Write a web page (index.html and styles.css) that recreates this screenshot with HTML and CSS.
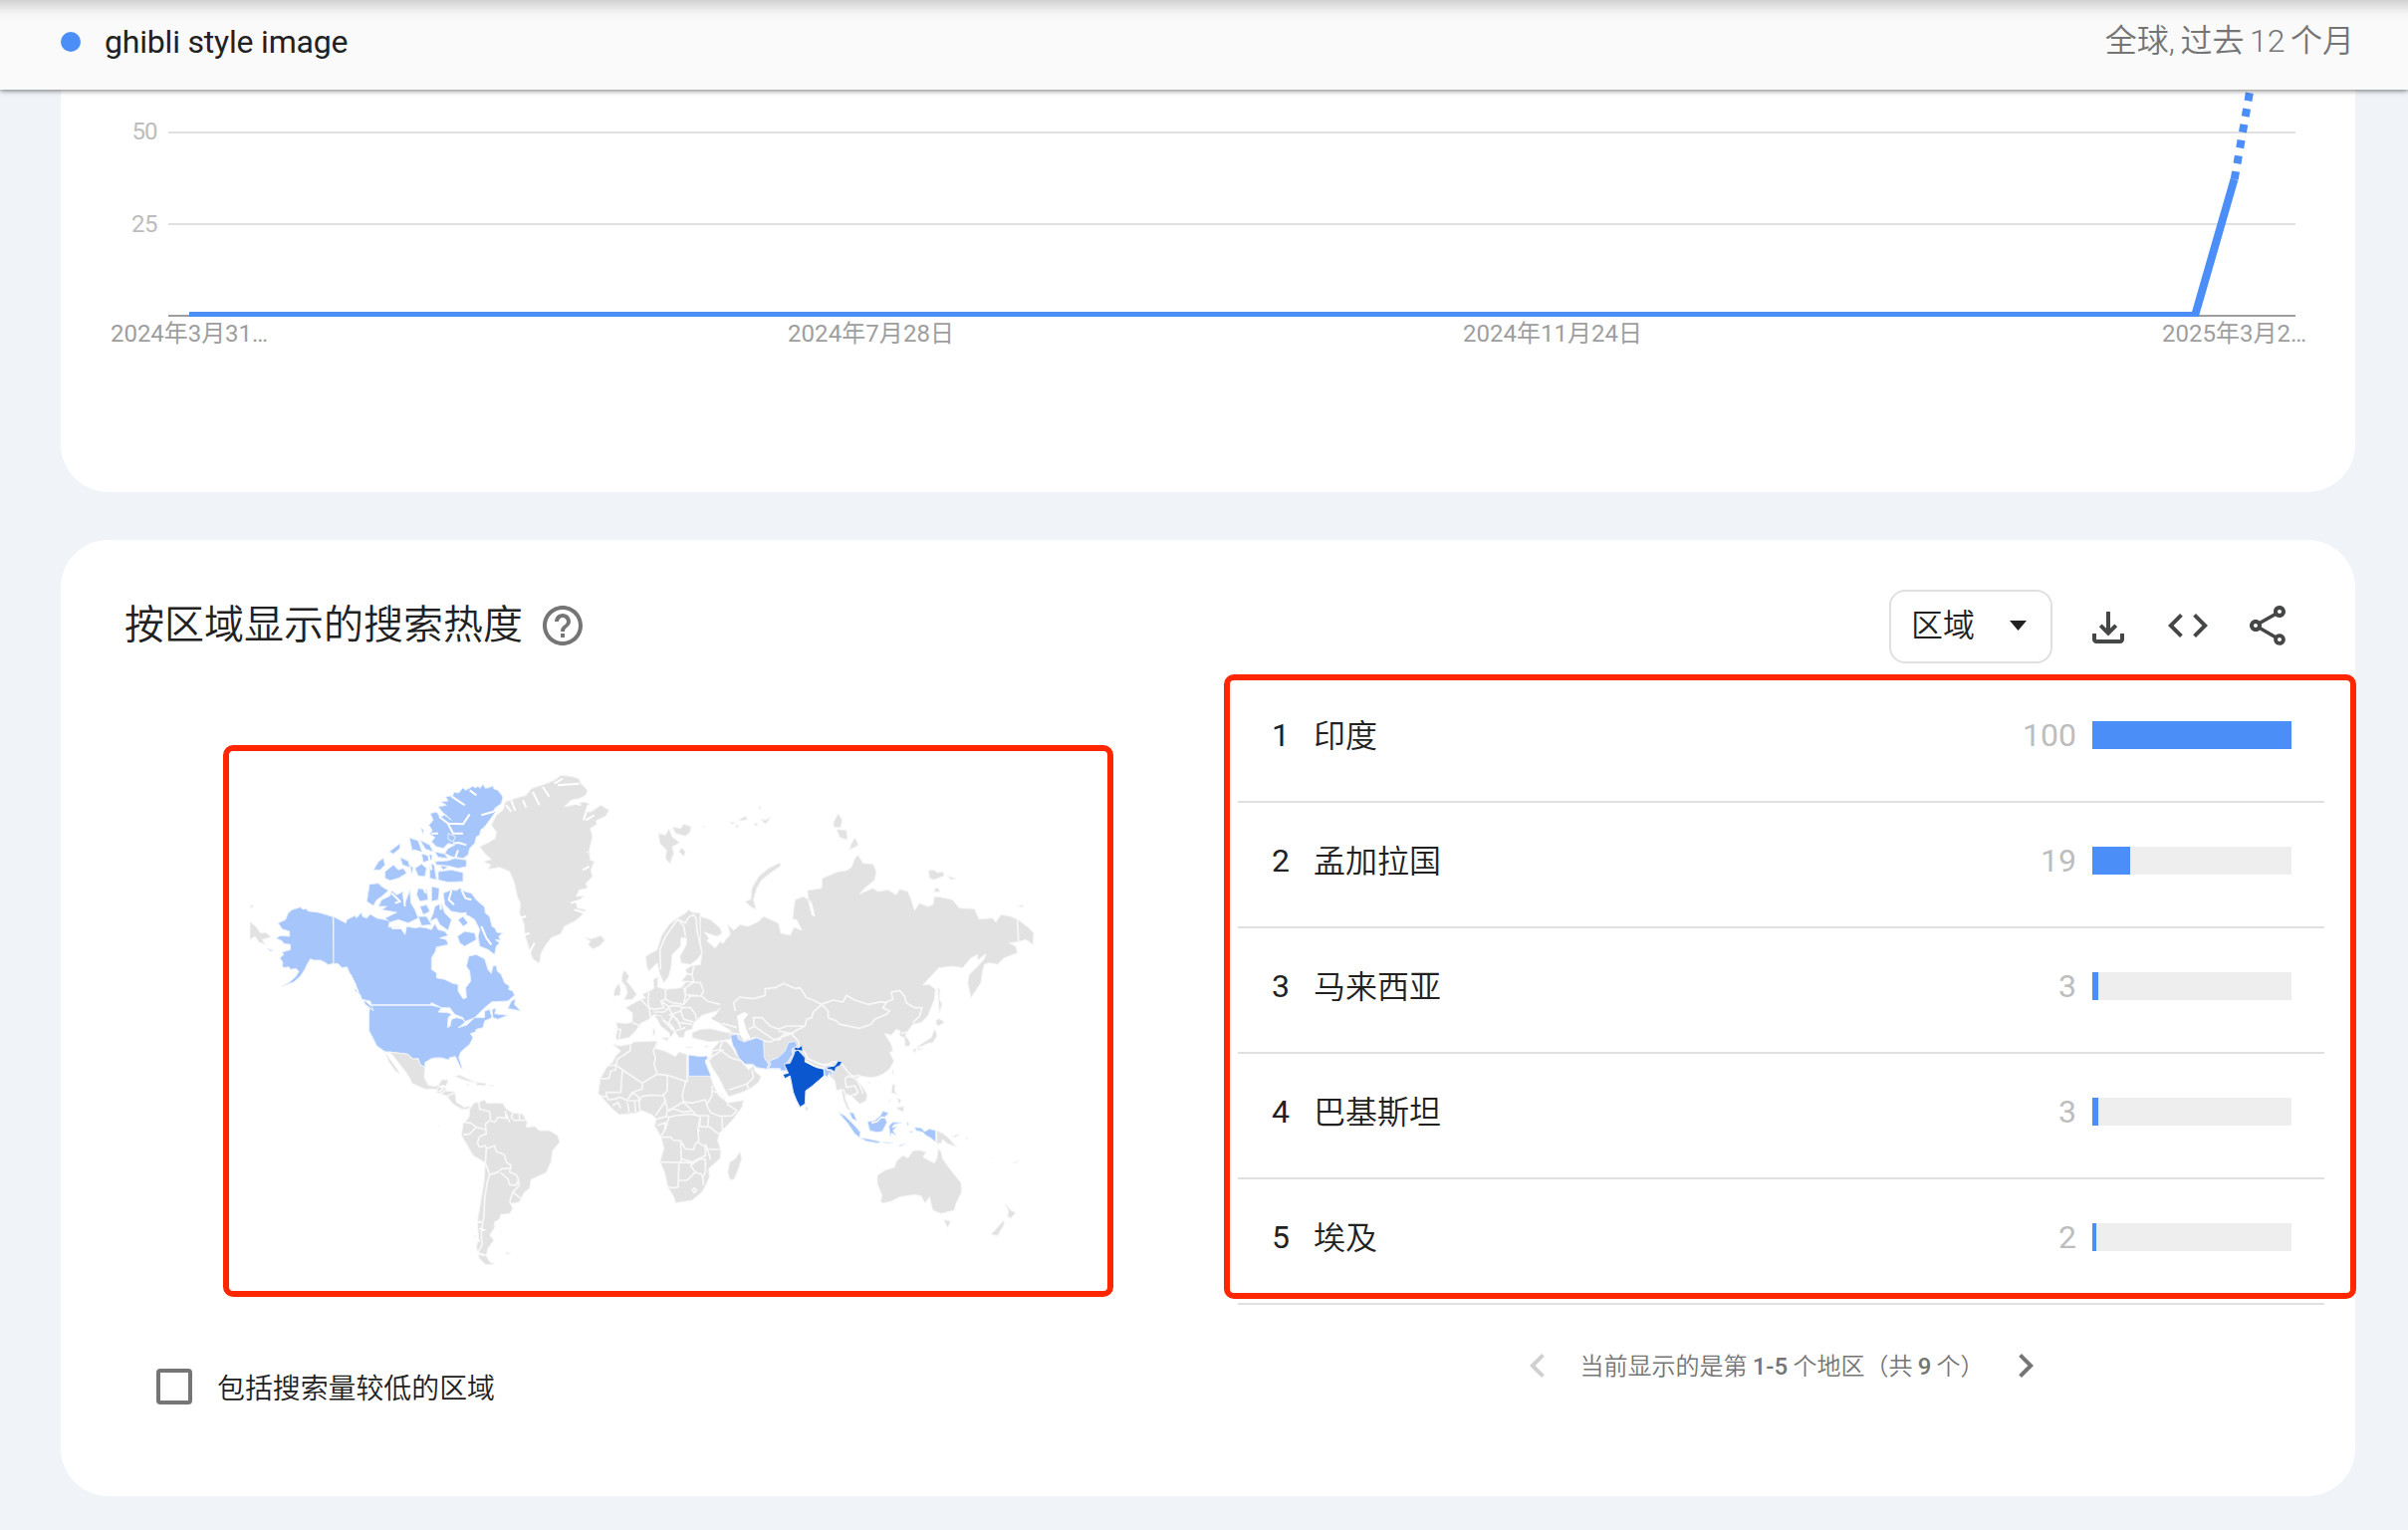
FILE: index.html
```html
<!DOCTYPE html>
<html lang="zh-CN">
<head>
<meta charset="utf-8">
<title>ghibli style image</title>
<link rel="stylesheet" href="styles.css">
</head>
<body>
<header class="topbar">
  <div class="term"><span class="term-dot"></span><span class="term-name">ghibli style image</span></div>
  <div class="scope">全球, 过去 12 个月</div>
</header>
<main class="page">
  <section class="card card-trend">
    <svg class="trend-chart" width="2304" height="404" viewBox="61 90 2304 404">
      <path class="grid" d="M169 133H2305M169 225H2305"/>
      <path class="axis" d="M169 317H2305"/>
      <clipPath id="plot"><rect x="190" y="60" width="2115" height="258"/></clipPath>
      <g clip-path="url(#plot)">
        <path class="series" d="M190 317H2204L2243.5 180"/>
        <path class="series dashed" d="M2243.7 180L2269 35"/>
      </g>
      <g class="ylabels">
        <text x="132.500" y="139.500" textLength="26">50</text>
        <text x="132" y="232.500" textLength="26.500">25</text>
      </g>
      <g class="xlabels">
        <text x="111" y="343" textLength="158">2024年3月31…</text>
        <text x="791" y="343" textLength="167">2024年7月28日</text>
        <text x="1469" y="343" textLength="180">2024年11月24日</text>
        <text x="2171" y="343" textLength="145">2025年3月2…</text>
      </g>
    </svg>
  </section>

  <section class="card card-region">
    <div class="card-head">
      <h2 class="card-title">按区域显示的搜索热度</h2>
      <svg class="icon help" viewBox="0 0 24 24"><path d="M11 18h2v-2h-2v2zm1-16C6.480 2 2 6.480 2 12s4.480 10 10 10 10-4.480 10-10S17.520 2 12 2zm0 18c-4.410 0-8-3.590-8-8s3.590-8 8-8 8 3.590 8 8-3.590 8-8 8zm0-14c-2.210 0-4 1.790-4 4h2c0-1.100.9-2 2-2s2 .9 2 2c0 2-3 1.750-3 5h2c0-2.250 3-2.500 3-5 0-2.210-1.790-4-4-4z"/></svg>
      <div class="actions">
        <div class="select"><span>区域</span><svg width="17" height="10" viewBox="0 0 17 10"><path d="M0 0h17L8.500 10z"/></svg></div>
        <svg class="icon" viewBox="0 -1 24 24"><path d="M16.590 11.600 15.200 10.200 13 12.400V4h-2v8.400L8.800 10.200 7.400 11.600l4.600 4.600zM4 15v3c0 1.100.9 2 2 2h12c1.100 0 2-.9 2-2v-3h-2v3H6v-3z"/></svg>
        <svg class="icon" viewBox="0 0 24 24"><path d="M9.400 16.600 4.800 12l4.600-4.600L8 6l-6 6 6 6 1.400-1.400zm5.200 0 4.600-4.600-4.600-4.600L16 6l6 6-6 6-1.400-1.400z"/></svg>
        <svg class="icon" viewBox="0 0 24 24"><path d="M18 16.080c-.76 0-1.440.3-1.960.77L8.910 12.700c.05-.23.09-.46.09-.7s-.04-.47-.09-.7l7.050-4.110c.54.5 1.250.81 2.040.81 1.660 0 3-1.340 3-3s-1.340-3-3-3-3 1.340-3 3c0 .24.040.47.090.7L8.040 9.810C7.500 9.310 6.790 9 6 9c-1.660 0-3 1.340-3 3s1.340 3 3 3c.79 0 1.500-.31 2.040-.81l7.120 4.160c-.05.21-.08.43-.08.65 0 1.610 1.310 2.920 2.920 2.920s2.920-1.310 2.920-2.920-1.310-2.920-2.920-2.920zM18 4c.55 0 1 .45 1 1s-.45 1-1 1-1-.45-1-1 .45-1 1-1zM6 13c-.55 0-1-.45-1-1s.45-1 1-1 1 .45 1 1-.45 1-1 1zm12 7.020c-.55 0-1-.45-1-1s.45-1 1-1 1 .45 1 1-.45 1-1 1z"/></svg>
      </div>
    </div>
    <div class="card-body">
      <div class="map-col">
        <div class="map-frame">
<svg class="map" width="882" height="542" viewBox="230 754 882 542">
  <!-- North America and Greenland -->
  <g transform="translate(220 740) scale(.33333)">
    <path class="hit" d="M245 512L252 519 262 517 268 524 300 528 320 534 343 541 345 681 330 686 318 678 305 672 285 672 275 668 265 685 258 700 245 720 225 738 190 750 212 738 230 722 240 706 232 697 215 700 210 692 200 694 190 692 192 678 183 665 195 655 190 648 215 640 215 625 195 622 190 614 172 606 185 598 212 600 212 585 190 578 178 560 200 550 208 530 220 520Z"/>
    <path class="hit" d="M345 541L382 560 385 550 410 537 413 545 430 528 432 540 445 545 455 533 475 545 515 553 510 572 545 572 560 595 565 570 590 575 605 572 625 575 640 580 650 562 660 580 680 585 690 598 665 605 685 610 690 625 668 630 655 632 652 645 640 665 640 700 655 710 655 725 680 730 705 742 720 745 720 765 735 788 745 785 743 755 758 735 755 705 745 690 752 660 775 655 800 668 810 700 820 712 825 690 835 688 838 705 850 715 860 740 875 750 872 760 885 765 890 778 870 795 822 797 800 815 770 845 740 857 735 845 710 835 695 815 670 815 640 800 636 806 460 806 455 795 430 790 425 775 410 765 412 745 400 725 385 692 370 695 358 682 345 682Z"/>
    <path class="hit" d="M455 808L640 808 670 815 660 828 690 830 700 835 690 845 688 875 696 870 700 850 715 845 735 850 740 860 720 875 745 868 770 845 800 845 800 825 815 820 822 845 800 855 795 875 775 880 772 888 757 893 765 905 755 925 728 948 722 965 733 998 727 995 718 975 712 962 695 965 692 972 670 966 650 966 640 968 620 980 620 997 605 985 600 968 585 970 568 955 500 947 475 930 463 905 452 885 452 830Z"/>
    <path class="hit" d="M765 148L772 153 780 148 786 154 795 142 802 154 812 152 825 147 828 156 840 160 855 180 850 200 830 215 833 225 815 250 800 270 788 280 785 295 775 300 770 320 755 335 750 355 735 365 700 360 680 350 690 335 710 325 690 320 675 335 655 330 640 315 650 302 635 292 642 280 632 265 645 250 636 230 655 225 665 240 680 235 700 250 672 225 660 210 685 205 668 195 690 192 682 180 704 176 708 166 722 168 735 152 742 160Z"/>
    <path class="hit" d="M650 375L690 372 710 365 745 370 745 390 720 395 690 388 655 385ZM660 405L700 400 735 408 735 435 690 437 660 430ZM465 400L480 375 495 365 500 385 485 400ZM500 405L525 385 540 400 555 395 565 410 540 425 515 432 500 425ZM513 345L545 320 545 335 525 352ZM573 303L600 312 612 347 582 342ZM605 310L635 325 645 345 622 338ZM610 350L642 355 640 370 615 377ZM590 395L610 382 625 395 620 420 600 418ZM635 380L648 385 655 430 635 425ZM545 362L570 373 575 393 553 385ZM608 273L616 279 614 293ZM575 385L585 395 580 412ZM690 290L712 300 705 315 690 308ZM650 345L680 352 690 365 660 362ZM665 385L690 392 675 400Z"/>
    <path class="hit" d="M453 443L480 440 490 450 510 462 490 480 475 490 465 508 445 495ZM490 490L515 478 520 462 535 475 555 465 560 500 575 460 578 500 590 520 600 545 570 560 540 550 515 558 500 545 535 528 490 520 505 510 480 510ZM600 455L625 460 630 490 605 495 595 475ZM605 510L625 505 635 525 615 535ZM640 450L665 455 660 490 640 495ZM600 540L625 540 640 565 610 568ZM650 510L670 500 680 530 700 550 690 582 665 565 655 545 635 555 645 530ZM675 470L700 460 715 462 725 455 740 465 760 470 775 490 800 512 802 530 815 540 822 570 832 576 836 588 854 590 842 600 848 612 832 610 845 620 835 630 830 655 810 640 785 630 780 600 785 580 770 550 755 540 730 530 700 525 680 505ZM718 600L740 585 770 590 775 610 740 630 725 620ZM720 550L735 540 750 560 735 570ZM880 795L893 788 890 805 908 825 885 820 870 818ZM822 820L835 817 830 833 870 838 840 850 825 845ZM435 790L460 812 465 824 440 805ZM145 637L163 643 155 645Z"/>
    <path class="water" d="M663 240L690 260 735 262 755 232M690 262L705 290 735 290M700 178L740 205M790 235L825 225 856 203M705 320L722 318 745 325M700 462L692 490 708 505M730 460L742 485 760 490M555 470L560 510M610 440L622 470M628 340L640 400M585 340L630 355M665 455L668 520M720 340L712 362M755 160L775 175M640 290L660 290M520 470L545 495 530 500M790 570L805 605 820 625M395 715L420 770M520 575L550 575M690 540L745 530M690 600L700 630"/>
    <path class="land" d="M1030 115L1060 118 1085 126 1090 140 1110 160 1105 175 1085 185 1060 190 1040 210 1065 205 1098 195 1115 200 1105 225 1120 225 1150 205 1175 220 1165 238 1135 252 1138 262 1118 275 1125 300 1115 340 1118 370 1130 375 1120 400 1125 420 1105 440 1110 455 1085 460 1075 480 1100 478 1075 500 1080 515 1105 520 1090 540 1070 555 1040 570 1030 592 1000 605 985 625 970 650 965 682 945 668 935 640 922 600 918 560 905 530 908 500 898 480 890 440 875 405 845 392 810 398 818 385 797 375 820 368 800 350 785 330 810 318 832 305 835 285 820 265 835 235 855 220 862 195 890 185 925 175 940 155 985 140 1010 130ZM1100 602L1120 608 1150 598 1162 612 1145 630 1125 638 1112 625 1118 615ZM93 555L110 570 125 590 140 588 157 602 130 610 140 625 120 618 108 600 93 610ZM94 504L105 510 94 515ZM1105 345L1118 350"/>
    <path class="water" d="M880 190L892 222M915 190L925 212M945 165L965 205M975 150L995 180M1020 145L1085 140M1035 125L1010 140M1060 195L1090 205M1112 205L1098 250M1090 490L1060 500M1115 390L1095 400M925 540L900 545M935 590L910 600M950 620L935 650M1105 530L1070 520M865 205L880 225M1130 235L1105 250"/>
  </g>
  <!-- Mexico, Central and South America -->
  <g transform="translate(400 1060) scale(.33333)">
    <path class="land" d="M-28 -12L28 -5 45 10 60 8 65 25 80 35 78 65 90 88 108 92 122 88 130 72 150 72 145 90 135 100 120 108 115 100 80 100 40 82 35 68 20 45 0 20 -15 0ZM-40 -12L-25 10 0 45 5 55 -10 45 -30 15ZM120 92L145 92 140 105 170 108 175 140 200 155 215 150 212 160 190 160 165 145 145 120 115 110ZM170 62L185 58 200 65 235 80 205 75ZM235 80L262 82 265 90 235 88ZM205 86L217 88 210 91ZM275 88L288 89 275 92ZM122 210L126 212 123 214Z"/>
    <path class="land" d="M240 140L260 132 265 142 315 143 325 160 345 172 375 175 388 200 385 215 410 212 425 225 455 225 480 240 486 260 465 285 460 320 445 352 400 372 395 400 380 410 365 440 345 445 335 440 345 460 335 475 308 478 305 492 290 500 288 515 295 510 275 540 288 555 270 580 265 600 240 592 235 575 242 550 238 500 248 440 258 380 262 322 225 300 205 265 190 240 195 205 213 185 215 160 228 142ZM240 598L265 603 275 620 290 628 262 628 245 612ZM320 594L340 592 328 598ZM228 543L236 540 233 550Z"/>
    <path class="border" d="M243 138L245 160 275 168 278 195 290 200 300 185 325 188 322 165M275 195L262 205 265 235 245 243 238 262 245 275 262 270 265 280 290 270 295 288 320 298 325 320 340 330 335 350 355 358 362 372 355 390 335 388 330 370 308 352M195 238L215 235 235 215 262 222M235 215L220 203 200 200M265 280L262 322 275 358 300 350 312 340 335 338M275 358L268 380 260 430 258 480 250 530 252 570 240 592M362 375L365 390 345 410 335 440M345 410L370 430M345 172L340 185 350 195 385 193M365 175L365 195M325 175L335 200M120 92L135 95 125 108M140 105L125 115M145 122L172 110"/>
    <path class="water" d="M235 500L250 500M245 520L262 526M232 545L245 560M130 90L150 95"/>
  </g>
  <!-- Africa -->
  <g transform="translate(580 1000) scale(.33333)">
    <path class="land" d="M105 145L125 150 160 145 170 138 235 135 240 140 235 158 262 165 295 182 305 168 335 178 370 182 390 182 385 195 400 240 410 270 425 300 445 315 450 322 500 314 495 335 465 375 428 412 422 435 432 465 430 488 395 520 397 545 385 572 375 590 345 615 295 623 290 605 272 575 262 530 248 500 260 460 252 425 232 390 238 370 225 358 195 345 175 352 125 357 105 340 85 318 62 292 68 250 90 210 105 200 115 180 130 165ZM490 468L494 490 485 520 472 552 458 553 452 530 458 500 475 490Z"/>
    <path class="border" d="M160 145L158 165 120 190 115 207 90 210M115 207L115 222 100 225 95 247 70 250M135 222L130 290 85 290M115 207L135 222 195 262 240 235 230 205 235 185 228 165 238 142M240 235L270 238 330 258 330 178M270 238L270 285 258 298 265 320 272 345 290 335 320 318 315 300 325 258M195 262L195 280 165 290 150 312M195 302L220 298 258 300 265 315 245 345 235 360M85 290L92 312 110 310M105 330L122 320 130 338M70 300L92 305M150 320L155 350M172 318L175 350M185 315L188 345M110 310L130 305 150 315 185 315 195 300M150 312L165 292 180 300 190 315M320 318L345 322 385 312 390 330 400 350 430 362 465 360 480 345 450 325M320 320L345 345 360 360 395 360M405 270L405 300 390 325M405 285L430 295 445 312M435 362L437 410M395 360L392 390 425 415M370 360L368 392 392 395M275 365L295 360 340 355 370 362 362 400 365 435 355 445 350 462 325 460 310 435 290 435 280 425 255 425M275 365L265 400 250 425M268 348L268 362 275 365M240 370L268 362M310 435L312 465 312 490 310 502M312 490L345 500 385 480 385 455 362 440M385 445L397 480 400 492M385 460L430 462M385 490L385 530 375 550M250 500L345 502M305 505L303 575 290 578 272 575M303 555L330 555 355 530 340 510 365 492 385 490M355 530L375 538 380 570M240 390L265 380 262 405M345 585L352 578 359 585 352 592ZM268 348L290 340 320 350 345 345M362 400L368 408"/>
    <path class="hit" d="M334 177L370 182 390 180 392 190 384 197 402 241 334 241Z"/>
    <!-- Arabia and Turkey -->
    <path class="land" d="M400 190L406 160 430 135 450 138 465 155 480 180 500 205 515 222 530 210 535 228 553 242 545 260 525 275 500 288 455 303 445 285 425 245 405 215 395 192ZM345 110L370 100 400 98 430 105 460 112 462 130 430 135 400 138 370 132 345 125ZM325 152L350 154 335 157ZM382 152L396 148 388 155ZM688 330L695 338 692 346 686 342Z"/>
    <path class="border" d="M405 165L428 162 435 138M428 162L440 170 460 185 490 195M455 283L510 265 515 278M510 265L530 245 525 222M405 170L400 192"/>
  </g>
  <!-- Europe and Asia -->
  <g transform="translate(560 740) scale(.33333)">
    <path class="land" d="M265 660L300 640 312 600 335 565 360 545 385 530 395 520 405 527 430 530 428 545 430 575 430 620 435 650 420 670 400 685 372 680 368 660 388 625 388 605 372 605 370 630 345 655 342 690 335 720 320 740 308 715 300 680 275 705 268 690Z"/>
    <path class="land" d="M430 540L460 550 490 575 495 592 480 600 442 588 455 605 450 615 475 635 490 615 498 622 510 605 520 595 512 565 530 582 550 565 575 570 605 555 620 540 665 560 672 590 700 597 712 572 735 582 720 550 706 548 710 520 715 490 740 480 755 490 765 535 775 540 765 500 755 488 752 462 795 455 797 425 845 405 870 402 885 392 895 365 905 355 920 380 950 382 960 405 955 430 925 455 910 472 950 455 965 465 995 460 1020 475 1030 458 1055 465 1065 490 1075 522 1090 500 1115 510 1130 505 1135 480 1155 482 1190 490 1210 515 1255 517 1270 548 1310 545 1320 557 1335 535 1365 540 1390 552 1420 575 1434 590 1432 625 1410 610 1385 617 1360 620 1380 630 1385 650 1345 665 1325 685 1300 680 1285 685 1280 705 1275 740 1245 785 1235 740 1240 715 1265 690 1285 668 1290 652 1265 672 1265 655 1245 665 1220 695 1190 690 1148 695 1100 747 1120 745 1138 760 1135 790 1115 840 1095 860 1070 865 1055 885 1047 898 1062 920 1060 930 1047 932 1045 905 1030 900 1032 885 1020 880 1005 898 985 893 1005 925 1010 945 1000 950 1013 975 1000 1000 980 1015 960 1023 940 1025 910 1020 900 1030 920 1055 932 1075 930 1095 910 1105 900 1095 885 1080 868 1075 865 1085 875 1110 882 1125 872 1120 860 1090 855 1060 840 1065 835 1035 815 1015 800 1000 740 1000 690 1000 635 1000 600 997 540 960 530 930 520 900 515 880 495 868 470 862 462 845 475 838 490 815 480 825 455 832 435 838 410 860 405 880 385 885 380 905 365 905 350 880 325 855 300 838 290 835 275 850 250 862 235 885 215 905 180 912 175 905 180 875 175 860 210 862 225 858 225 830 205 815 240 795 265 785 255 775 275 765 290 757 288 730 303 722 300 752 325 760 372 755 385 740 372 735 390 715 385 700 400 690 430 685 435 650 430 620Z"/>
    <path class="land" d="M290 838L312 840 318 855 340 878 352 888 340 905 335 890 310 870 300 850ZM312 906L335 905 330 915ZM287 880L293 878 293 898 287 896ZM200 702L206 708 215 720 208 735 225 755 238 775 225 790 200 792 210 770 205 750 192 735 195 715ZM185 742L190 760 188 778 168 780 172 758ZM565 495L582 488 585 455 605 420 635 395 670 378 672 388 640 410 615 430 600 455 590 490 598 520 580 510ZM303 290L325 295 335 275 345 300 368 318 345 330 350 350 338 382 325 365 328 340 308 320ZM345 270L370 275 380 262 403 270 398 288 385 298 355 290ZM365 345L373 333 385 345 380 360ZM520 255L535 258 525 263ZM545 250L565 238 572 248 555 252ZM590 262L602 258 600 268ZM610 245L625 250 645 240 625 262ZM605 210L612 208 610 220ZM535 268L545 262 540 274ZM436 270L445 268 440 272ZM830 258L845 230 857 248 853 272 832 272ZM840 278L870 280 873 310 850 302ZM885 320L895 303 907 325 878 340ZM1117 402L1132 400 1145 408 1160 405 1165 418 1145 425 1135 430 1120 425ZM1175 418L1200 426 1185 430ZM1135 458L1143 453 1153 465 1135 467ZM1386 510L1398 505 1405 511ZM1145 755L1152 760 1150 790 1158 805 1150 832 1147 790ZM1140 852L1150 848 1165 858 1148 870 1140 865ZM1138 880L1143 900 1130 920 1115 922 1100 930 1080 935 1105 918 1125 905 1133 885ZM1070 940L1082 938 1075 952ZM1085 937L1102 937 1086 943ZM1007 1005L1013 1003 1010 1018ZM935 1040L942 1040 938 1045Z"/>
    <path class="sea" d="M540 840L562 828 575 835 560 852 568 880 580 905 562 916 548 895 545 870ZM690 480L698 480 712 500 708 550 715 560 705 575 698 570 704 545 698 500ZM415 862L440 838 465 850 490 862 500 875 460 872 420 880Z"/>
    <path class="border" d="M310 700L308 640 325 600 350 565 362 548 380 570 385 600M362 548L385 560 395 542 410 535 417 545 420 585 435 650M535 825L530 800 548 783 590 788 625 778 625 758 655 755 680 742 715 757 730 755 750 785 765 790 795 805 770 828 765 845 750 850 745 870 715 885 705 895M592 870L590 845 615 845 640 870 665 880 690 870 745 870M592 870L620 890 650 910 668 912 680 895 710 890M575 910L600 905 620 915 640 918 670 905 710 892M575 880L592 870M705 895L725 915 728 935 745 950M665 885L700 892M380 805L400 780 435 780 450 795 490 805M385 775L385 755 410 738 430 740 440 765 430 780 385 775M372 735L410 738 405 715 385 712M405 715L410 690M325 760L325 790 345 800 380 805 385 780 380 755M325 790L310 795 320 815 290 820 275 815 272 795 275 768M250 790L275 815 280 845M225 860L250 870M180 880L190 880 185 908M310 795L335 812 350 808M290 828L320 828 335 815 345 835 370 825 375 812 345 808M370 825L380 850 410 858M375 815L400 815 415 835 418 850M335 835L360 850 370 875M345 835L365 860 385 862 405 865M355 885L385 875M345 840L335 860 352 880M495 862L540 875M515 880L525 892 548 895M745 950L752 968 790 985 805 990 825 980 850 978 860 990M1385 552L1388 617M445 975L500 940"/>
    <path class="border" d="M795 805L830 792 860 798 870 778 895 792 935 805 975 797 990 800 980 815 1000 825 990 835 955 850 945 865 910 877 850 865 840 855 815 845 815 825ZM985 800L1010 790 1005 768 1030 763 1045 780 1050 800 1075 815 1098 815 1090 840 1070 860M1035 893L1052 888M860 990L875 1010 890 1022 910 1018M865 1030L875 1020 900 1030 915 1060 920 1075M865 1030L870 1055 895 1050 905 1070 895 1080M860 1060L866 1075M885 1080L905 1070"/>
    <path class="hit" d="M520 898L540 895 545 910 562 918 600 905 620 915 622 965 635 985 630 1000 600 995 588 985 565 985 545 965 535 940 528 930Z"/>
  </g>
  <g transform="translate(580 1000) scale(.33333)">
    <path class="hit" d="M578 195L605 185 625 165 635 140 655 136 662 150 645 160 648 175 635 195 625 205 630 225 612 225 610 218 575 218 582 205Z"/>
    <path class="top" d="M665 163L675 175 685 185 685 198 700 205 720 215 742 220 742 240 725 255 705 272 687 285 685 325 670 334 660 315 650 290 643 255 640 240 625 248 618 236 635 232 622 205 640 202 650 180 655 165ZM652 153L665 156 677 148 678 166 662 163 655 165ZM752 214L775 210 785 195 797 198 790 210 778 215 775 228 765 222 752 220Z"/>
    <path class="hit" d="M742 215L750 222 764 226 770 242 758 232 752 244 744 236Z"/>
    <path class="border" d="M685 195L712 210 742 218M692 188L720 200 742 208M742 205L770 208"/>
  </g>
  <!-- South-East Asia and Oceania -->
  <g transform="translate(780 1000) scale(.33333)">
    <path class="hit" d="M186 351L205 360 235 390 252 410 250 426 235 415 215 385ZM218 350L232 352 241 376 228 370ZM250 427L275 430 312 438 305 443 270 437ZM318 440L350 442 335 444ZM368 450L388 443 375 452ZM273 378L295 375 312 360 320 346 337 352 325 365 332 380 318 408 300 410 280 405ZM338 392L348 380 376 381 352 388 348 396 362 392 350 405 360 420 346 412 342 424ZM392 378L398 385 394 392ZM415 395L435 397 445 408 460 400 479 405 479 440 465 428 450 420 440 410 420 405ZM400 407L412 408 402 411Z"/>
    <path class="border" d="M285 382L302 378 315 365 332 366"/>
    <path class="land" d="M482 405L500 413 515 425 542 454 515 445 500 432 495 444 482 444ZM525 425L552 413 540 425ZM348 266L357 268 355 285 362 295 345 292ZM363 335L382 332 382 349 365 342ZM362 305L376 315 368 325ZM335 322L345 308 340 320ZM303 540L325 525 355 515 360 498 380 480 395 488 410 466 430 464 450 470 440 485 475 503 482 490 487 458 495 470 500 490 510 505 525 525 555 562 557 590 540 625 535 645 495 655 470 645 460 605 447 624 435 602 415 598 370 605 345 618 320 624 313 618 317 600 303 565ZM503 672L520 678 526 675 514 698ZM688 625L705 645 720 652 705 670 695 662 698 648ZM684 674L685 688 665 722 645 718 662 700ZM712 503L730 494 722 502ZM645 485L649 488 646 489ZM570 425L576 430 571 430Z"/>
  </g>
</svg>
        </div>
        <label class="low-volume"><span class="box"></span><span class="low-text">包括搜索量较低的区域</span></label>
      </div>
      <div class="list-col">
        <ol class="regions">
          <li><span class="rank">1</span><span class="name">印度</span><span class="value">100</span><span class="bar"><i style="width:100%"></i></span></li>
          <li><span class="rank">2</span><span class="name">孟加拉国</span><span class="value">19</span><span class="bar"><i style="width:19%"></i></span></li>
          <li><span class="rank">3</span><span class="name">马来西亚</span><span class="value">3</span><span class="bar"><i style="width:3%"></i></span></li>
          <li><span class="rank">4</span><span class="name">巴基斯坦</span><span class="value">3</span><span class="bar"><i style="width:3%"></i></span></li>
          <li><span class="rank">5</span><span class="name">埃及</span><span class="value">2</span><span class="bar"><i style="width:2%"></i></span></li>
        </ol>
        <div class="list-mark"></div>
        <div class="pager">
          <svg class="icon prev" viewBox="0 0 24 24"><path d="M15.410 7.410 14 6l-6 6 6 6 1.410-1.410L10.830 12z"/></svg>
          <span class="pager-text">当前显示的是第 <b>1-5</b> 个地区（共 <b>9</b> 个）</span>
          <svg class="icon next" viewBox="0 0 24 24"><path d="M10 6 8.590 7.410 13.170 12l-4.580 4.590L10 18l6-6z"/></svg>
        </div>
      </div>
    </div>
  </section>
</main>
</body>
</html>
```
FILE: styles.css
```css
* { box-sizing: border-box; }
body {
  margin: 0;
  height: 1536px;
  overflow: hidden;
  background: #f0f4f9;
  color: #212121;
  font-family: Roboto, "Noto Sans CJK SC", sans-serif;
}
.topbar {
  position: relative;
  z-index: 2;
  display: flex;
  justify-content: space-between;
  height: 90px;
  padding: 0 54px 0 61px;
  font-size: 32px;
  background: linear-gradient(#d0d0d0, #e4e4e4 7px, #f5f5f5 14px, #fafafa 24px);
  box-shadow: 0 1px 5px rgba(0, 0, 0, .55);
}
.term { display: flex; align-items: center; height: 84px; gap: 24px; }
.term-name { letter-spacing: -.2px; padding-bottom: 1px; }
.term-dot { width: 20px; height: 20px; border-radius: 50%; background: #4b8ef8; }
.scope { color: #757575; line-height: 82px; word-spacing: -2.300px; font-weight: 350; }

.page { padding: 0 53px 0 61px; }
.card { background: #fff; }
.card-trend { height: 404px; border-radius: 0 0 48px 48px; margin-bottom: 48px; }
.trend-chart { display: block; }
.grid { stroke: #e0e0e0; stroke-width: 2; }
.axis { stroke: #9e9e9e; stroke-width: 2; }
.series { fill: none; stroke: #4b8ef8; stroke-width: 8; }
.dashed { stroke-dasharray: 8 8; }
.trend-chart text { font-size: 24px; }
.ylabels { fill: #bdbdbd; }
.xlabels { fill: #9e9e9e; }

.card-region { height: 960px; border-radius: 48px; padding-top: 50px; }
.card-head { display: flex; align-items: center; height: 74px; padding: 0 64px 0 64px; }
.card-title { margin: 0; padding-bottom: 2px; font-size: 40px; font-weight: 350; line-height: 72px; }
.icon { display: block; width: 48px; height: 48px; fill: #444746; }
.help { fill: #757575; margin: -2px 0 0 16px; }
.actions { display: flex; align-items: center; gap: 32px; margin-left: auto; }
.actions .icon { margin-top: -2px; }
.select {
  display: flex;
  align-items: center;
  justify-content: space-between;
  width: 164px;
  height: 74px;
  padding: 0 24px 8px 20px;
  border: 2px solid #e0e0e0;
  border-radius: 16px;
  font-size: 32px;
  font-weight: 350;
}
.select svg { fill: #212121; margin-top: 6px; }

.card-body { display: flex; }
.map-col { width: 1168px; padding: 82px 0 0 96px; }
.map-frame {
  width: 894px;
  height: 554px;
  margin-left: 67px;
  border: 6px solid #ff2600;
  border-radius: 10px;
}
.map { display: block; }
.land { fill: #e2e2e2; stroke: #f6f6f6; stroke-width: 3; stroke-linejoin: round; }
.hit { fill: #a6c5fb; stroke: #e9f1fe; stroke-width: 3; stroke-linejoin: round; }
.top { fill: #0b57d0; stroke: #dbe7fb; stroke-width: 3; stroke-linejoin: round; }
.sea { fill: #fff; }
.border { fill: none; stroke: #f8f8f8; stroke-width: 5; stroke-linejoin: round; }
.water { fill: none; stroke: #fff; stroke-width: 6; stroke-linejoin: round; }

.low-volume { display: flex; align-items: center; gap: 25px; height: 36px; margin-top: 72px; font-size: 27.900px; font-weight: 350; line-height: 36px; }
.low-text { padding-top: 6px; }
.box { width: 36px; height: 36px; border: 4px solid #757575; border-radius: 4px; }

.list-col { position: relative; width: 1136px; padding: 14px 0 0 14px; }
.list-mark {
  position: absolute;
  left: 0;
  top: 11px;
  width: 1137px;
  height: 627px;
  border: 6px solid #ff2600;
  border-radius: 10px;
}
.regions { list-style: none; margin: 0; padding: 0; width: 1091px; }
.regions li {
  display: flex;
  align-items: center;
  height: 126px;
  padding: 0 33px 8px 34px;
  border-bottom: 2px solid #e0e0e0;
  font-size: 32px;
}
.rank { width: 42px; }
.name { flex: 1; font-weight: 350; padding-bottom: 4px; }
.value { color: #bdbdbd; margin-right: 16px; }
.bar { width: 200px; height: 28px; background: #eee; }
.bar i { display: block; height: 100%; background: #4b8ef8; }

.pager {
  display: flex;
  align-items: center;
  justify-content: space-between;
  width: 538px;
  height: 48px;
  margin: 37px 0 0 277px;
  color: #757575;
  font-size: 24px;
}
.pager-text { font-weight: 350; word-spacing: -.6px; padding: 0 0 4px 1px; }
.pager b { font-weight: 500; }
.prev { fill: #d0d0d0; }
.next { fill: #757575; }
```
